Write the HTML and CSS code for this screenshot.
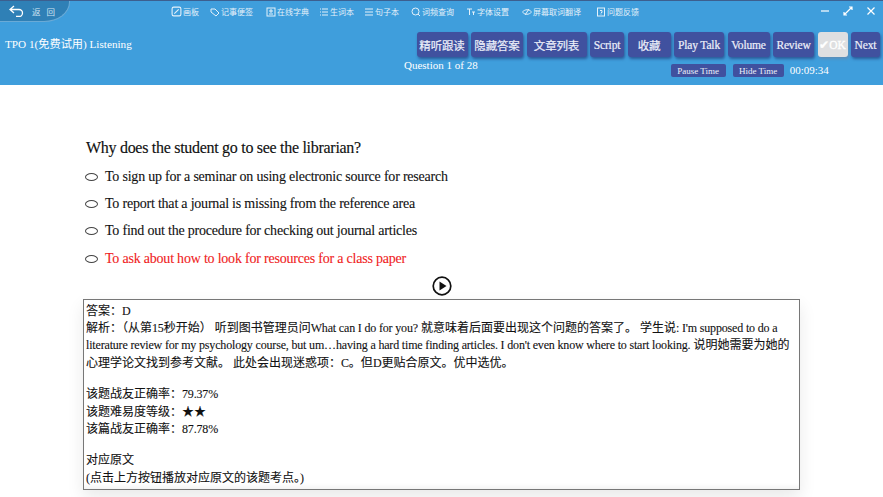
FILE: index.html
```html
<!DOCTYPE html>
<html lang="zh">
<head>
<meta charset="utf-8">
<title>TPO 1 Listening</title>
<link rel="stylesheet" href="styles.css">
</head>
<body>
<header class="header">
  <div class="topbar">
    <div class="back">
      <svg class="back-icon" viewBox="0 0 16 12" width="16" height="12"><path d="M5 1 1 4.500 5 8M1 4.500h9a3.500 3.500 0 0 1 0 7H7"/></svg>
      <span>返</span><span>回</span>
    </div>
    <nav class="tools">
      <span class="tool t1"><svg viewBox="0 0 10 10" width="11" height="11"><rect x="1" y="1" width="8" height="8" rx="1.500"/><path d="M3 7 7 3"/></svg>画板</span>
      <span class="tool t2"><svg viewBox="0 0 10 10" width="10" height="10"><path d="M1 2h4l4 4-3 3-5-4z"/></svg>记事便签</span>
      <span class="tool t3"><svg viewBox="0 0 10 10" width="10" height="10"><rect x="1" y="1" width="8" height="8"/><path d="M3 7h4M4 3h2v2H4z"/></svg>在线字典</span>
      <span class="tool t4"><svg viewBox="0 0 10 10" width="10" height="10"><path d="M1 2h1M1 5h1M1 8h1M3 2h6M3 5h6M3 8h6"/></svg>生词本</span>
      <span class="tool t5"><svg viewBox="0 0 10 10" width="10" height="10"><path d="M1 2h8M1 5h8M1 8h8"/></svg>句子本</span>
      <span class="tool t6"><svg viewBox="0 0 10 10" width="10" height="10"><circle cx="4.500" cy="4.500" r="3.500"/><path d="m7 7 2 2"/></svg>词频查询</span>
      <span class="tool t7"><svg viewBox="0 0 10 10" width="10" height="10"><path d="M1 2h5M3.500 2v6M6 5h3M7.500 5v3"/></svg>字体设置</span>
      <span class="tool t8"><svg viewBox="0 0 10 10" width="10" height="10"><path d="M.5 5C3 2 7 2 9.500 5 7 8 3 8 .5 5zM3 8l4-6"/></svg>屏幕取词翻译</span>
      <span class="tool"><svg viewBox="0 0 10 10" width="10" height="10"><rect x="1.500" y="1" width="7" height="8"/><path d="M4 3.500h2v2H5M5 6.500v1"/></svg>问题反馈</span>
    </nav>
    <div class="win">
      <svg viewBox="0 0 10 10" width="10" height="10"><path d="M1 5h8"/></svg>
      <svg viewBox="0 0 10 10" width="10" height="10"><path d="M1 9 9 1M6 1h3v3M1 6v3h3"/></svg>
      <svg viewBox="0 0 10 10" width="10" height="10"><path d="M1.500 1.500l7 7M8.500 1.500l-7 7"/></svg>
    </div>
  </div>
  <div class="mainbar">
    <div class="title">TPO 1(免费试用) Listening</div>
    <div class="controls">
      <div class="buttons">
        <span class="btn b51">精听跟读</span>
        <span class="btn b52">隐藏答案</span>
        <span class="btn b60">文章列表</span>
        <span class="btn b34">Script</span>
        <span class="btn b43">收藏</span>
        <span class="btn b50">Play Talk</span>
        <span class="btn b42">Volume</span>
        <span class="btn b41">Review</span>
        <span class="btn ok">✔OK</span>
        <span class="btn b29">Next</span>
      </div>
      <div class="status">
        <span class="count">Question 1 of 28</span>
        <span class="mini m1">Pause Time</span>
        <span class="mini m2">Hide Time</span>
        <span class="clock">00:09:34</span>
      </div>
    </div>
  </div>
</header>
<main class="content">
  <h1 class="question">Why does the student go to see the librarian?</h1>
  <ul class="options">
    <li class="option"><i class="radio"></i>To sign up for a seminar on using electronic source for research</li>
    <li class="option"><i class="radio"></i>To report that a journal is missing from the reference area</li>
    <li class="option"><i class="radio"></i>To find out the procedure for checking out journal articles</li>
    <li class="option correct"><i class="radio"></i>To ask about how to look for resources for a class paper</li>
  </ul>
  <div class="play">
    <svg viewBox="0 0 20 20" width="20" height="20"><circle cx="10" cy="10" r="8.800"/><path class="tri" d="M7.500 5.500 14.500 10l-7 4.500z"/></svg>
  </div>
  <section class="answer">
    <p>答案：D</p>
    <p>解析：（从第<span class="en">15</span>秒开始） 听到图书管理员问<span class="en">What can I do for you?</span> 就意味着后面要出现这个问题的答案了。 学生说<span class="en">: I'm supposed to do a literature review for my psychology course, but um…having a hard time finding articles. I don't even know where to start looking.</span> 说明她需要为她的心理学论文找到参考文献。 此处会出现迷惑项：<span class="en">C</span>。但<span class="en">D</span>更贴合原文。优中选优。</p>
    <p class="gap">该题战友正确率：<span class="en">79.37%</span></p>
    <p>该题难易度等级：★★</p>
    <p>该篇战友正确率：<span class="en">87.78%</span></p>
    <p class="gap">对应原文</p>
    <p>(点击上方按钮播放对应原文的该题考点。)</p>
  </section>
</main>
```

FILE: styles.css
```css
* { box-sizing: border-box; }
html, body { margin: 0; height: 100%; }
body {
  width: 883px;
  height: 497px;
  overflow: hidden;
  background: #fff;
  font-family: "Liberation Serif", "Noto Sans CJK SC", serif;
  color: #111;
}
.header {
  height: 85px;
  background: #3f9edc;
  border-top: 1px solid #3c5f8f;
  color: #fff;
}
.topbar { display: flex; align-items: flex-start; height: 31px; }
.back {
  width: 70px;
  height: 21px;
  display: flex;
  align-items: center;
  gap: 6px;
  padding: 0 0 1px 9px;
  background: #2f80b6;
  border-right: 1px solid #6aaad6;
  border-bottom: 1px solid #6aaad6;
  border-radius: 0 0 26px 0 / 0 0 20px 0;
  font-size: 8.500px;
  font-family: "Noto Sans CJK SC", sans-serif;
  color: #cfe3f1;
}
.back-icon { fill: none; stroke: #fff; stroke-width: 1.300; margin-right: 1px; }
.tools {
  display: flex;
  align-items: center;
  height: 21px;
  margin-left: 101px;
  font-family: "Noto Sans CJK SC", sans-serif;
  font-size: 8px;
  color: #e4f1fa;
}
.tool { display: flex; align-items: center; gap: 1px; }
.tool svg { fill: none; stroke: #e4f1fa; stroke-width: 1; }
.t1 { margin-right: 11px; }
.t2 { margin-right: 13px; }
.t3 { margin-right: 10px; }
.t4 { margin-right: 10px; }
.t5 { margin-right: 12px; }
.t6 { margin-right: 12px; }
.t7 { margin-right: 13px; }
.t8 { margin-right: 15px; }
.win { display: flex; gap: 13px; margin-left: auto; padding: 5px 7px 0 0; }
.win svg { fill: none; stroke: #fff; stroke-width: 1.200; }
.mainbar { display: flex; justify-content: space-between; }
.title { padding: 5px 0 0 5px; font-size: 11.200px; line-height: 14px; }
.controls { width: 480px; padding-right: 3px; }
.buttons { display: flex; gap: 3.500px; justify-content: flex-end; }
.btn {
  height: 25px;
  display: flex;
  align-items: center;
  justify-content: center;
  background: #40519f;
  border-radius: 3px;
  box-shadow: 1px 2px 3px #2b5b9a;
  font-size: 11.500px;
  letter-spacing: -.15px;
  -webkit-text-stroke: .2px #eef0fa;
  color: #eef0fa;
}
.b51 { width: 51px; }
.b52 { width: 52px; }
.b60 { width: 60px; }
.b34 { width: 34px; }
.b43 { width: 43px; }
.b50 { width: 50px; }
.b42 { width: 42px; }
.b41 { width: 41px; }
.b29 { width: 29px; }
.ok { width: 30px; background: #dedfe1; color: #fff; -webkit-text-stroke: .3px #fff; box-shadow: 1px 2px 3px #5b8db8; }
.status { display: flex; align-items: flex-start; margin-top: 2px; }
.count { margin-left: 1px; font-size: 11px; line-height: 13px; }
.mini {
  height: 13px;
  margin-top: 5px;
  display: flex;
  align-items: center;
  justify-content: center;
  background: #40519f;
  border-radius: 2px;
  font-size: 9px;
  color: #eef0fa;
}
.m1 { width: 55px; margin-left: 193px; }
.m2 { width: 51px; margin-left: 7px; }
.clock { margin: 5px 0 0 6px; font-size: 11px; line-height: 13px; }
.content { padding: 0 83px; }
.question {
  margin: 53px 0 0 3px;
  font-size: 16px;
  letter-spacing: -.29px;
  font-weight: normal;
  line-height: 20px;
  -webkit-text-stroke: .15px #111;
}
.options { list-style: none; margin: 5px 0 0 2px; padding: 0; }
.option {
  display: flex;
  align-items: center;
  gap: 7px;
  height: 27.400px;
  font-size: 14px;
  letter-spacing: -.21px;
  -webkit-text-stroke: .1px currentColor;
}
.correct { color: #f01c1c; }
.radio {
  width: 13px;
  height: 8px;
  border: 1px solid #444;
  border-radius: 50%;
}
.play { display: flex; justify-content: center; height: 26px; padding-top: 3px; }
.play svg { fill: none; stroke: #111; stroke-width: 1.700; }
.play .tri { fill: #111; stroke: none; }
.answer {
  width: 717px;
  height: 191px;
  padding: 3px 2px;
  border: 1px solid #777;
  box-shadow: 0 7px 16px rgba(0, 0, 0, .09), inset 0 -5px 5px -3px rgba(0, 0, 0, .06);
  font-size: 12px;
  line-height: 17.400px;
  -webkit-text-stroke: .1px #111;
}
.en { letter-spacing: -.17px; }
.answer p { margin: 0; }
.answer .gap { margin-top: 14px; }
```
